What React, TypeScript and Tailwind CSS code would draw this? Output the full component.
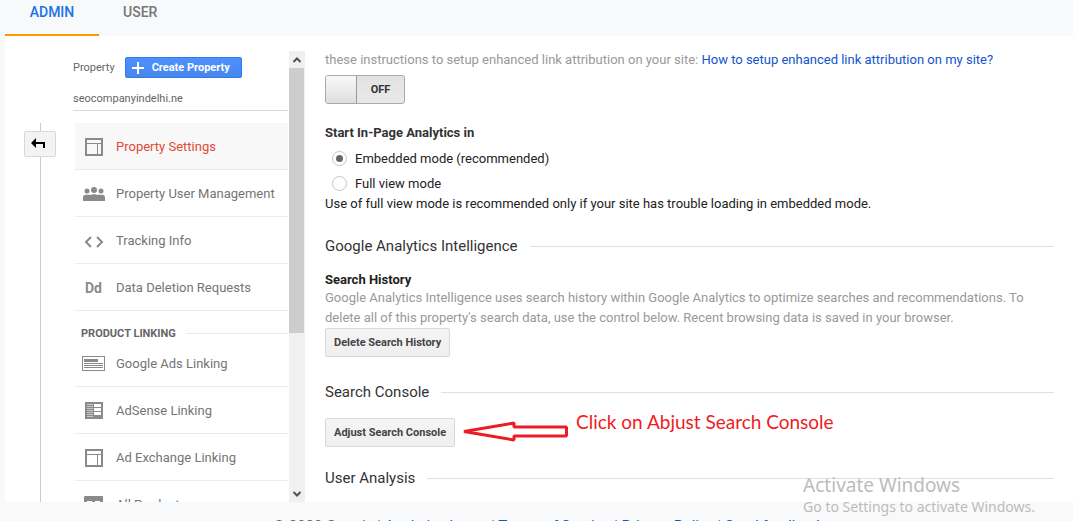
import { useState } from "react";
import type { ReactNode } from "react";

const LayoutIcon = () => (
  <svg width="18" height="18" viewBox="0 0 18 18" fill="#8a8a8a" shapeRendering="crispEdges">
    <path fillRule="evenodd" d="M0 0h18v18H0zM2 2v3h14V2zM2 6v10h10V6zM13 6v10h3V6z" />
  </svg>
);

const UsersIcon = () => (
  <svg width="22" height="14" viewBox="0 0 22 14" fill="#8a8a8a">
    <circle cx="4" cy="4" r="2.5" />
    <circle cx="11" cy="3" r="3" />
    <circle cx="18" cy="4" r="2.5" />
    <path d="M0 14v-3.500c0-1.800 1.200-2.800 2.800-2.800h3.200c.8 0 1.500.1 2 .4.600-.6 1.400-.9 2.400-.9h1.200c1 0 1.800.3 2.400.9.500-.3 1.200-.4 2-.4h3.200c1.600 0 2.800 1 2.800 2.800V14z" />
  </svg>
);

const CodeIcon = () => (
  <svg width="20" height="14" viewBox="0 0 20 14" fill="none" stroke="#8a8a8a" strokeWidth="2">
    <path d="M7 3L2 8l5 5M13 3l5 5-5 5" />
  </svg>
);

const AdsIcon = () => (
  <svg width="23" height="15" viewBox="0 0 23 15" fill="#8a8a8a" shapeRendering="crispEdges">
    <path fillRule="evenodd" d="M0 0h23v15H0zM1 1v13h21V1z" />
    <path d="M2 3h14v3H2zM2 7h19v1H2zM2 9h19v1H2zM2 11h19v1H2z" />
  </svg>
);

const AdSenseIcon = () => (
  <svg width="18" height="17" viewBox="0 0 18 17" shapeRendering="crispEdges">
    <path fill="#8a8a8a" d="M0 0h18v17H0z" />
    <path fill="#c8c8c8" d="M2 2h6v1H2zM2 4h6v1H2zM2 6h6v1H2zM2 8h6v1H2zM2 10h6v1H2zM2 12h6v1H2zM2 14h6v1H2z" />
    <path fill="#fff" d="M9 2h7v3H9zM9 6h7v3H9zM9 10h7v3H9z" />
  </svg>
);

const ProductsIcon = () => (
  <svg width="19" height="17" viewBox="0 0 19 17">
    <rect width="19" height="17" rx="1" fill="#8a8a8a" />
    <path fill="#fff" d="M3 5h5v4H3zM11 5h5v4h-5z" />
  </svg>
);

type NavItemProps = {
  icon: ReactNode;
  label: string;
  active?: boolean;
};

const NavItem = ({ icon, label, active = false }: NavItemProps) => (
  <li>
    <a
      href="#"
      className={`flex h-[47px] items-center gap-[11px] border-b border-[#ebebeb] pt-px pl-[7px] text-[13px] ${active ? "bg-[#f8f8f8] text-[#dd4b39]" : "text-[#757575]"}`}
    >
      <span className="flex w-[23px] shrink-0 justify-center">{icon}</span>
      <span className="pt-px whitespace-nowrap">{label}</span>
    </a>
  </li>
);

const SectionTitle = ({ children }: { children: ReactNode }) => (
  <h2 className="flex items-center gap-3 text-[15px] leading-5 text-[#333]">
    {children}
    <span className="h-px flex-1 bg-[#e0e0e0]" />
  </h2>
);

const GrayButton = ({ children }: { children: ReactNode }) => (
  <button className="block h-[29px] rounded-xs border border-[#d8d8d8] bg-linear-to-b from-[#f5f5f5] to-[#efefef] px-2 text-[11px] font-bold text-[#444]">
    {children}
  </button>
);

const Sidebar = () => (
  <aside className="flex w-[232px] shrink-0 pt-[15px]">
    <div className="min-w-0 flex-1 overflow-hidden">
      <div className="flex items-center gap-[10px] pt-[6px] text-[11px] text-[#666]">
        <span className="pt-[2px]">Property</span>
        <button className="flex h-[21px] items-center gap-2 rounded-xs border border-[#3079ed] bg-linear-to-b from-[#4d90fe] to-[#4787ed] pt-px pr-[11px] pl-[6px] font-bold text-white">
          <svg width="12" height="12" viewBox="0 0 12 12" fill="#fff">
            <path d="M5 0h2v5h5v2H7v5H5V7H0V5h5z" />
          </svg>
          Create Property
        </button>
      </div>
      <div className="mt-2 h-[25px] border-b border-[#d9d9d9] pt-px text-[11px] leading-6 text-[#666]">
        seocompanyindelhi.ne
      </div>
      <nav className="mt-3 ml-[2px]">
        <ul>
          <NavItem icon={<LayoutIcon />} label="Property Settings" active />
          <NavItem icon={<UsersIcon />} label="Property User Management" />
          <NavItem icon={<CodeIcon />} label="Tracking Info" />
          <NavItem
            icon={<span className="text-sm font-bold text-[#8a8a8a]">Dd</span>}
            label="Data Deletion Requests"
          />
        </ul>
        <h3 className="flex h-[29px] items-center gap-[10px] pt-4 pl-[6px] text-[11px] leading-3 font-bold text-[#666]">
          PRODUCT LINKING
          <span className="h-px flex-1 bg-[#ebebeb]" />
        </h3>
        <ul>
          <NavItem icon={<AdsIcon />} label="Google Ads Linking" />
          <NavItem icon={<AdSenseIcon />} label="AdSense Linking" />
          <NavItem icon={<LayoutIcon />} label="Ad Exchange Linking" />
          <NavItem icon={<ProductsIcon />} label="All Products" />
        </ul>
      </nav>
    </div>
    <div className="ml-px flex w-4 shrink-0 flex-col items-center bg-[#f0f0f0]">
      <svg className="h-[17px] shrink-0" width="10" viewBox="0 0 10 17" fill="none" stroke="#505050" strokeWidth="2">
        <path d="M1.500 11L5 7.500 8.500 11" />
      </svg>
      <div className="mr-px h-[265px] w-[15px] bg-[#cdcdcd]" />
      <svg className="mt-auto h-[17px] shrink-0" width="10" viewBox="0 0 10 17" fill="none" stroke="#505050" strokeWidth="2">
        <path d="M1.500 7L5 10.500 8.500 7" />
      </svg>
    </div>
  </aside>
);

type ModeRadioProps = {
  label: string;
  value: string;
  mode: string;
  onChange: (value: string) => void;
};

const ModeRadio = ({ label, value, mode, onChange }: ModeRadioProps) => (
  <label className="flex h-[25px] items-center gap-2 pl-[7px]">
    <input
      type="radio"
      name="mode"
      value={value}
      checked={mode === value}
      onChange={() => onChange(value)}
      className="flex size-[15px] appearance-none items-center justify-center rounded-full border border-[#c6c6c6] bg-white before:size-[7px] before:rounded-full checked:before:bg-[#666]"
    />
    {label}
  </label>
);

const Settings = () => {
  const [mode, setMode] = useState("embedded");
  const [enhanced, setEnhanced] = useState(false);

  return (
    <section className="min-w-0 flex-1 overflow-hidden pt-[14px] pr-[19px] pl-5 text-[13px] leading-5 text-[#222]">
      <p className="text-[#999]">
        these instructions to setup enhanced link attribution on your site:{" "}
        <a href="#" className="text-[#15c]">
          How to setup enhanced link attribution on my site?
        </a>
      </p>
      <button
        role="switch"
        aria-checked={enhanced}
        aria-label="Enhanced link attribution"
        onClick={() => setEnhanced(!enhanced)}
        className={`mt-[5px] flex h-[29px] w-20 items-stretch overflow-hidden rounded-[3px] border border-[#aaa] bg-linear-to-b from-[#e2e2e2] to-[#e9e9e9] text-[11px] font-bold text-[#333] ${enhanced ? "flex-row-reverse" : ""}`}
      >
        <span className="w-[31px] border-r border-[#999] bg-linear-to-b from-[#f9f9f9] to-[#dedede]" />
        <span className="flex flex-1 items-center justify-center">{enhanced ? "ON" : "OFF"}</span>
      </button>

      <h3 className="mt-[19px] font-bold text-[#333]">Start In-Page Analytics in</h3>
      <div className="mt-[3px]">
        <ModeRadio label="Embedded mode (recommended)" value="embedded" mode={mode} onChange={setMode} />
        <ModeRadio label="Full view mode" value="full" mode={mode} onChange={setMode} />
      </div>
      <p className="leading-4">
        Use of full view mode is recommended only if your site has trouble loading in embedded mode.
      </p>

      <div className="mt-6">
        <SectionTitle>Google Analytics Intelligence</SectionTitle>
        <h3 className="mt-4 leading-4 font-bold">Search History</h3>
        <p className="text-[#999]">
          Google Analytics Intelligence uses search history within Google Analytics to optimize searches and
          recommendations. To delete all of this property's search data, use the control below. Recent browsing
          data is saved in your browser.
        </p>
        <GrayButton>Delete Search History</GrayButton>
      </div>

      <div className="mt-[25px]">
        <SectionTitle>Search Console</SectionTitle>
        <div className="relative mt-4">
          <GrayButton>Adjust Search Console</GrayButton>
          <svg className="absolute top-[2px] left-[136px]" width="108" height="24" viewBox="0 0 108 24" fill="none" stroke="#ed1c24" strokeWidth="3">
            <path strokeLinejoin="bevel" d="M3 11.500L53 3v4h52.500v9H53v4z" />
          </svg>
          <p className="absolute -top-3 left-[251px] font-[Lato,sans-serif] text-[19px] leading-8 whitespace-nowrap text-[#ed1c24]">
            Click on Abjust Search Console
          </p>
        </div>
      </div>

      <div className="mt-[21px]">
        <SectionTitle>User Analysis</SectionTitle>
      </div>
    </section>
  );
};

const App = () => (
  <div className="relative flex h-screen flex-col overflow-hidden bg-[#f8f9fb] font-[Roboto,sans-serif]">
    <header className="flex h-9 shrink-0 pl-[5px] text-center text-sm font-medium">
      <a href="#" className="min-w-[94px] border-b-2 border-[#ff9800] px-6 pt-[2px] text-[#1a73e8]">
        ADMIN
      </a>
      <a href="#" className="px-6 pt-[2px] text-[#757575]">
        USER
      </a>
    </header>
    <main className="ml-[5px] flex min-h-0 flex-1 bg-white">
      <div className="flex w-[68px] shrink-0 flex-col items-center pt-[87px] pl-[2px]">
        <span className="h-2 w-px bg-[#ccc]" />
        <button aria-label="Collapse" className="flex h-[26px] w-8 items-center justify-center rounded-xs border border-[#d8d8d8] bg-[#f3f3f3]">
          <svg width="18" height="12" viewBox="0 0 18 12">
            <path d="M0 5l5-5v4h9v6h-2V6H5v4z" />
          </svg>
        </button>
        <span className="w-px flex-1 bg-[#ccc]" />
      </div>
      <Sidebar />
      <Settings />
    </main>
    <footer className="h-[19px] shrink-0 overflow-hidden pt-[13px] pl-6 text-center text-[15px] text-[#666]">
      © 2020 Google | <a href="#" className="text-[#15c]">Analytics home</a> |{" "}
      <a href="#" className="text-[#15c]">Terms of Service</a> |{" "}
      <a href="#" className="text-[#15c]">Privacy Policy</a> |{" "}
      <a href="#" className="text-[#15c]">Send feedback</a>
    </footer>
    <div className="pointer-events-none absolute right-[38px] bottom-1 font-[Noto_Sans,sans-serif] text-[#bcbcbc]">
      <p className="text-[19px] leading-6">Activate Windows</p>
      <p className="text-sm leading-5">Go to Settings to activate Windows.</p>
    </div>
  </div>
);

export default App;
